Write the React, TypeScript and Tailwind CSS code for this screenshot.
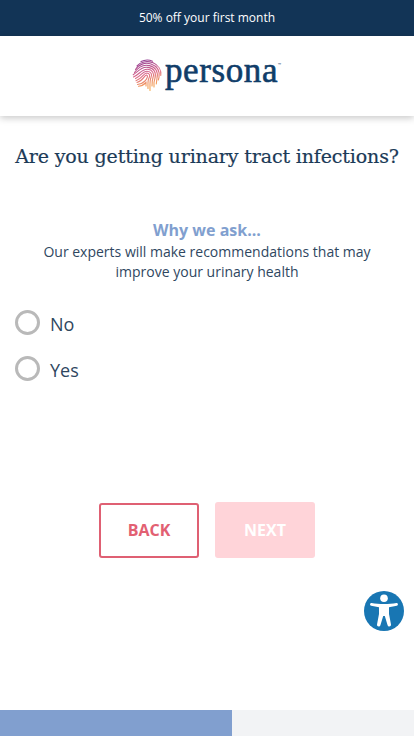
import { useState } from "react";

const ANSWERS = ["No", "Yes"];

const Logo = () => {
  return (
    <div className="flex h-[34px] w-[150px] items-start">
      <svg width="31" height="34" viewBox="0 0 31 34" fill="none" className="shrink-0">
        <defs>
          <linearGradient id="print" x1="8" y1="1" x2="18" y2="33" gradientUnits="userSpaceOnUse">
            <stop offset="0" stopColor="#8c3a94" />
            <stop offset="0.45" stopColor="#dc6a8c" />
            <stop offset="0.75" stopColor="#f0965f" />
            <stop offset="1" stopColor="#f7b04c" />
          </linearGradient>
        </defs>
        <g stroke="url(#print)" strokeWidth="1.1" strokeLinecap="round">
          <path d="M9 2.6C12.500.8 17 .6 20.500 2.200" />
          <path d="M5 6.800C8.500 2.800 15 1.500 21 3.800C26.500 6 29.500 11 28.800 16.500" />
          <path d="M3.500 10.500C6.500 5.500 13 3 19 5C25 7 28 12 27 18.500L26.300 21" />
          <path d="M2.500 13.500C6 8.500 11 5 17.500 6.600C23.500 8 26.500 13 25 19L24.300 25" />
          <path d="M1.200 15.800C6.500 12 9.500 7.600 16 8.400C22 9.200 24.500 13.500 23 19L22 23.500V28" />
          <path d="M1.500 18C7.500 15.500 9.500 10 15.500 10.300C20.500 10.600 22.500 14.500 21 18.500C20 21.500 20 23 20 27" />
          <path d="M3.500 19.600C9.500 17 10.500 12 15 12.200C19 12.400 20.500 15.500 19 18.500C17.600 21.500 18 25 18 31.500" />
          <path d="M4 21.800C10.500 19.500 11.500 14 14.800 14C17.500 14.200 18.500 16.500 17 19C15.500 21.600 16 25 16 29.500" />
          <path d="M5 23.500C11 22 12.500 16 14.500 16C16.500 16.500 15 20 13 22C10.500 24.500 8 25.300 5.500 25.500" />
          <path d="M6.500 27.200C9.500 27.200 12 25.500 14 23.500V27" />
        </g>
      </svg>
      <span className="ml-[2px] -mt-[8px] font-['Liberation_Serif',serif] text-[35px] leading-[40px] tracking-[0.6px] text-[#103d69] [-webkit-text-stroke:0.6px_#103d69]">
        persona
      </span>
      <span className="mt-[4px] font-['Open_Sans',sans-serif] text-[4px] leading-[4px] text-[#103d69]">™</span>
    </div>
  );
};

const AccessibilityButton = () => {
  return (
    <button aria-label="Accessibility" className="absolute left-[364px] top-[591px] size-10">
      <svg width="40" height="40" viewBox="0 0 40 40">
        <circle cx="20" cy="20" r="20" fill="#1876b3" />
        <circle cx="20" cy="7.300" r="3.800" fill="#fff" />
        <path
          d="M7.600 12C15 13.300 25 13.300 32.400 12C34.200 11.800 34.500 14.500 32.800 14.800L25 16.300V23L27 33.500C27.300 35.700 24.200 36.200 23.600 34.200L20.800 25H19.200L16.400 34.200C15.800 36.200 12.700 35.700 13 33.500L15 23V16.300L7.200 14.800C5.500 14.500 5.800 11.800 7.600 12Z"
          fill="#fff"
        />
      </svg>
    </button>
  );
};

export default function App() {
  const [answer, setAnswer] = useState("");

  return (
    <div className="relative flex h-[736px] w-[414px] flex-col overflow-hidden bg-white font-['Open_Sans',sans-serif] text-[#2f475f]">
      <div className="flex h-9 shrink-0 items-center justify-center bg-[#123456] text-xs text-white">
        50% off your first month
      </div>
      <header className="flex h-20 shrink-0 justify-center bg-white pt-[23px] shadow-[0_2px_7px_rgba(0,0,0,0.22)]">
        <Logo />
      </header>

      <main className="flex grow flex-col">
        <h1 className="mt-[26px] whitespace-nowrap text-center font-['DejaVu_Serif',serif] text-[19px] leading-7 tracking-[-0.14px] text-[#1b3a57] [-webkit-text-stroke:0.2px_#1b3a57]">
          Are you getting urinary tract infections?
        </h1>
        <div className="mt-[50px] text-center">
          <p className="text-base font-bold leading-5 text-[#819fcf]">Why we ask...</p>
          <p className="mx-auto mt-[2px] w-[340px] text-sm leading-5">
            Our experts will make recommendations that may improve your urinary health
          </p>
        </div>
        <div className="mt-[27px] flex flex-col gap-5 pl-[15px]">
          {ANSWERS.map((item) => (
            <button key={item} className="flex h-[26px] items-center gap-[10px] text-lg" onClick={() => setAnswer(item)}>
              <span className="flex size-[25px] items-center justify-center rounded-full border-3 border-[#b9b9b9]">
                {answer === item && <span className="size-3 rounded-full bg-[#819fcf]" />}
              </span>
              <span className="mt-[3px]">{item}</span>
            </button>
          ))}
        </div>
        <div className="mt-[121px] flex justify-center gap-4 font-bold">
          <button className="mt-px h-[55px] w-[100px] rounded-[3px] border-2 border-[#df6073] pb-[2px] text-[#e26072]">
            BACK
          </button>
          <button disabled={!answer} className="h-14 w-[100px] rounded-[3px] bg-[#ffd4d9] text-white">
            NEXT
          </button>
        </div>
      </main>

      <div className="h-[26px] shrink-0 bg-[#f2f3f5]">
        <div className="h-full w-[232px] bg-[#819fcf]" />
      </div>
      <AccessibilityButton />
    </div>
  );
}
